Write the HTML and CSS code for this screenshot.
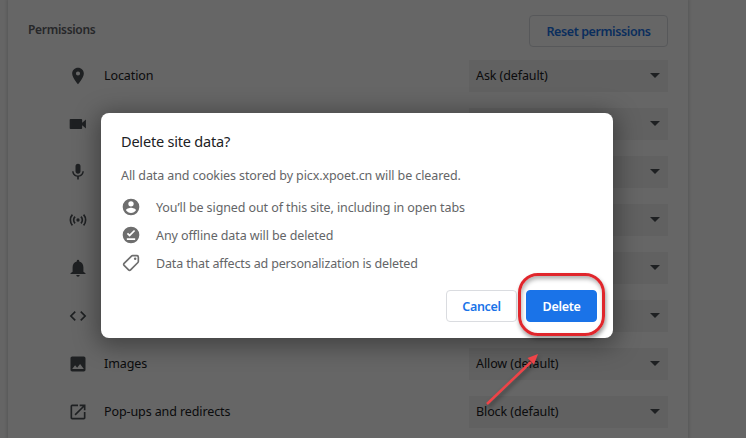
FILE: index.html
```html
<!DOCTYPE html>
<html lang="en">
<head>
<meta charset="utf-8">
<title>Site permissions</title>
<link rel="stylesheet" href="styles.css">
</head>
<body>
<main class="card">
  <header class="card-header">
    <h1>Permissions</h1>
    <button class="btn reset">Reset permissions</button>
  </header>
  <div class="row">
    <svg class="icon" viewBox="0 0 24 24"><path d="M12 2C8.1 2 5 5.1 5 9c0 5.300 7 13 7 13s7-7.700 7-13c0-3.900-3.100-7-7-7zm0 9.500a2.500 2.500 0 1 1 0-5 2.500 2.500 0 0 1 0 5z"/></svg>
    <span class="label">Location</span>
    <div class="select"><span>Ask (default)</span></div>
  </div>
  <div class="row">
    <svg class="icon" viewBox="0 0 24 24"><path d="M17 10.500V7c0-.6-.4-1-1-1H3c-.6 0-1 .4-1 1v10c0 .6.400 1 1 1h13c.6 0 1-.4 1-1v-3.500l4.500 4v-11z"/></svg>
    <span class="label"></span>
    <div class="select"></div>
  </div>
  <div class="row">
    <svg class="icon" viewBox="0 0 24 24"><path d="M12 14c1.700 0 3-1.300 3-3V5a3 3 0 0 0-6 0v6c0 1.700 1.300 3 3 3zm5.300-3c0 3-2.500 5.100-5.300 5.100S6.700 14 6.700 11H5c0 3.400 2.700 6.200 6 6.700V21h2v-3.300c3.300-.5 6-3.300 6-6.700z"/></svg>
    <span class="label"></span>
    <div class="select"></div>
  </div>
  <div class="row">
    <svg class="icon" viewBox="0 0 24 24"><circle cx="12" cy="12" r="2"/><path class="line" d="M8.500 8a5.500 5.500 0 0 0 0 8M15.500 8a5.500 5.500 0 0 1 0 8M5.300 5.500a9.800 9.800 0 0 0 0 13M18.700 5.500a9.800 9.800 0 0 1 0 13"/></svg>
    <span class="label"></span>
    <div class="select"></div>
  </div>
  <div class="row">
    <svg class="icon" viewBox="0 0 24 24"><path d="M12 22.500c1.100 0 2-.9 2-2h-4c0 1.100.9 2 2 2zM18.500 16.500V11c0-3.400-1.800-6.200-5-6.900V3.500a1.500 1.500 0 0 0-3 0v.6c-3.200.7-5 3.500-5 6.900v5.500L3 18.300v1h18v-1z"/></svg>
    <span class="label"></span>
    <div class="select"></div>
  </div>
  <div class="row">
    <svg class="icon" viewBox="0 0 24 24"><path d="M9.400 16.600 4.800 12l4.600-4.600L8 6l-6 6 6 6zM14.600 16.600l4.600-4.600-4.600-4.600L16 6l6 6-6 6z"/></svg>
    <span class="label"></span>
    <div class="select"></div>
  </div>
  <div class="row">
    <svg class="icon" viewBox="0 0 24 24"><path d="M21 19V5c0-1.100-.9-2-2-2H5c-1.100 0-2 .9-2 2v14c0 1.100.9 2 2 2h14c1.100 0 2-.9 2-2zM8.500 13.500l2.500 3 3.500-4.500 4.500 6H5z"/></svg>
    <span class="label">Images</span>
    <div class="select"><span>Allow (default)</span></div>
  </div>
  <div class="row">
    <svg class="icon" viewBox="0 0 24 24"><path d="M19 19H5V5h7V3H5a2 2 0 0 0-2 2v14c0 1.100.9 2 2 2h14c1.100 0 2-.9 2-2v-7h-2zM14 3v2h3.600l-9.800 9.800 1.400 1.400L19 6.400V10h2V3z"/></svg>
    <span class="label">Pop-ups and redirects</span>
    <div class="select"><span>Block (default)</span></div>
  </div>
</main>

<div class="backdrop">
  <section class="dialog" role="dialog">
    <h2>Delete site data?</h2>
    <p class="intro">All data and cookies stored by picx.xpoet.cn will be cleared.</p>
    <ul>
      <li><svg viewBox="0 0 24 24"><path d="M12 2a10 10 0 1 0 0 20 10 10 0 0 0 0-20zm0 3a3.200 3.200 0 1 1 0 6.400A3.200 3.200 0 0 1 12 5zm0 14.200c-2.500 0-4.700-1.300-6-3.200 0-2 4-3.100 6-3.100s6 1.100 6 3.100c-1.300 1.900-3.500 3.200-6 3.200z"/></svg><span>You’ll be signed out of this site, including in open tabs</span></li>
      <li><svg viewBox="0 0 24 24"><path d="M12 2a10 10 0 1 0 0 20 10 10 0 0 0 0-20zm5 16H7v-2h10zm-6.700-4L7 10.700l1.400-1.400 1.900 1.900 5.300-5.300L17 7.300z"/></svg><span>Any offline data will be deleted</span></li>
      <li><svg viewBox="0 0 24 24"><path class="tag" d="M13.800 3.200H19c1 0 1.800.8 1.800 1.800v5.200c0 .5-.2.900-.5 1.200l-8.800 8.900c-.7.700-1.700.7-2.400 0l-5.400-5.400c-.7-.7-.7-1.700 0-2.400l8.900-8.800c.3-.3.700-.5 1.200-.5z"/><circle cx="17" cy="7" r="1.500"/></svg><span class="tight">Data that affects ad personalization is deleted</span></li>
    </ul>
    <footer>
      <button class="btn cancel">Cancel</button>
      <button class="btn delete">Delete</button>
    </footer>
  </section>
</div>

<div class="highlight"></div>
<svg class="arrow" viewBox="0 0 70 64"><path class="shaft" d="M8 54 52 12"/><path class="head" d="m59 4-4 10.500-6.500-6.500z"/></svg>
</body>
</html>
```
FILE: styles.css
```css
* { box-sizing: border-box; }
body {
  margin: 0;
  height: 438px;
  overflow: hidden;
  background: #fcfcfc;
  color: #202124;
  font: 12.500px/20px "Noto Sans", "Open Sans", sans-serif;
  letter-spacing: -.1px;
}
h1, h2, p, ul { margin: 0; padding: 0; }
button { font: inherit; letter-spacing: inherit; }
.card {
  width: 680px;
  height: 438px;
  margin-left: 8px;
  padding: 11px 20px 0;
  background: #fff;
  box-shadow: 0 0 3px 1px rgba(60, 64, 67, .2);
}
.card-header {
  height: 40px;
  display: flex;
  align-items: center;
  justify-content: space-between;
}
h1 {
  margin-top: -2px;
  font-size: 12px;
  font-weight: 600;
  color: #5f6368;
  line-height: 20px;
  letter-spacing: -.3px;
}
.btn {
  height: 32px;
  padding: 1px 0 0;
  border: 1px solid #dadce0;
  border-radius: 4px;
  background: #fff;
  color: #1a73e8;
  font-weight: 600;
  letter-spacing: -.3px;
  white-space: nowrap;
}
.reset { width: 139px; letter-spacing: -.4px; }
.row { height: 48px; display: flex; align-items: center; }
.icon { width: 20px; height: 20px; margin: 1px 0 0 40px; fill: #4d5156; }
.icon .line { fill: none; stroke: #4d5156; stroke-width: 2; }
.label { flex: 1; margin-left: 16px; padding-top: 2px; white-space: nowrap; }
.select {
  width: 199px;
  height: 32px;
  margin-top: 1px;
  padding: 0 8px 0 7px;
  display: flex;
  align-items: center;
  background: #f3f3f3;
}
.select span { padding-top: 1px; }
.select::after {
  content: "";
  margin-left: auto;
  border: 5px solid transparent;
  border-top-color: #4d5156;
  border-bottom: 0;
}
.backdrop {
  position: absolute;
  inset: 0;
  padding: 113px 0 0 101px;
  background: rgba(0, 0, 0, .6);
}
.dialog {
  width: 512px;
  height: 225px;
  padding: 17px 16px 16px 20px;
  display: flex;
  flex-direction: column;
  border-radius: 8px;
  background: #fff;
  color: #646567;
  white-space: nowrap;
  box-shadow: 0 4px 23px 4px rgba(0, 0, 0, .36);
}
h2 {
  font-size: 14.500px;
  line-height: 22px;
  font-weight: 400;
  color: #202124;
  letter-spacing: -.2px;
}
.intro { margin-top: 14px; }
ul { margin-top: 7px; list-style: none; }
li { height: 28px; display: flex; align-items: center; }
li svg { width: 20px; height: 20px; margin-right: 15px; fill: #6e6e6e; }
li span { padding-top: 2px; }
li .tight { letter-spacing: -.15px; }
li .tag { fill: none; stroke: #6e6e6e; stroke-width: 2; }
footer { display: flex; justify-content: flex-end; gap: 9px; margin-top: auto; }
footer .btn { width: 71px; }
.delete { background: #1a73e8; border-color: #1a73e8; color: #fff; }
.highlight {
  position: absolute;
  left: 518px;
  top: 273px;
  width: 87px;
  height: 63px;
  border: 3px solid #e0262c;
  border-radius: 20px;
  box-shadow: 1px 3px 4px rgba(0, 0, 0, .4), inset 1px 3px 4px rgba(0, 0, 0, .3);
}
.arrow {
  position: absolute;
  left: 479px;
  top: 350px;
  width: 70px;
  height: 64px;
  filter: drop-shadow(1px 3px 2px rgba(0, 0, 0, .4));
}
.shaft { stroke: #ee4448; stroke-width: 2.500; }
.head { fill: #ee4448; }
```
